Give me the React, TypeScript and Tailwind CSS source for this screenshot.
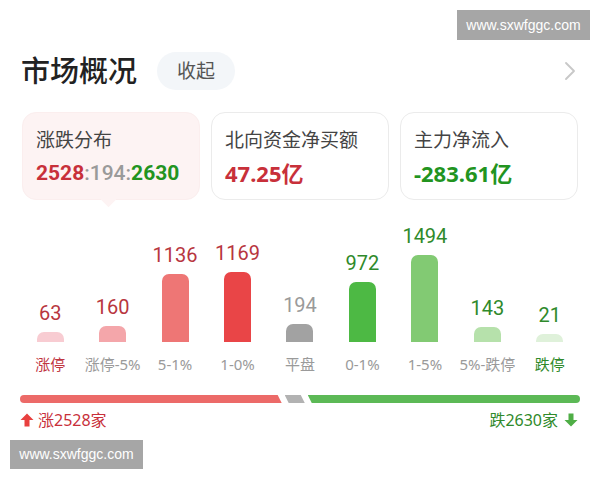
import { ChevronRight } from "lucide-react";

const bars = [
  { label: "涨停", value: 63, h: 10, bar: "bg-[#f8ccd2]", num: "text-[#b83640]", lab: "text-[#c0353f]" },
  { label: "涨停-5%", value: 160, h: 16, bar: "bg-[#f4a6aa]", num: "text-[#b83640]", lab: "text-[#9a9a9a]" },
  { label: "5-1%", value: 1136, h: 68, bar: "bg-[#ee7675]", num: "text-[#b83640]", lab: "text-[#9a9a9a]" },
  { label: "1-0%", value: 1169, h: 70, bar: "bg-[#e94547]", num: "text-[#b83640]", lab: "text-[#9a9a9a]" },
  { label: "平盘", value: 194, h: 18, bar: "bg-[#a2a2a2]", num: "text-[#9a9a9a]", lab: "text-[#9a9a9a]" },
  { label: "0-1%", value: 972, h: 60, bar: "bg-[#4db944]", num: "text-[#2f8a2b]", lab: "text-[#9a9a9a]" },
  { label: "1-5%", value: 1494, h: 87, bar: "bg-[#82ca73]", num: "text-[#2f8a2b]", lab: "text-[#9a9a9a]" },
  { label: "5%-跌停", value: 143, h: 15, bar: "bg-[#b6e1ab]", num: "text-[#2f8a2b]", lab: "text-[#9a9a9a]" },
  { label: "跌停", value: 21, h: 8, bar: "bg-[#dff1da]", num: "text-[#2f8a2b]", lab: "text-[#2f8a2b]" },
];

const up = 2528;
const flat = 194;
const down = 2630;

function Arrow({ down, color }: { down?: boolean; color: string }) {
  return (
    <svg width="14" height="14" viewBox="0 0 14 14" className={down ? "rotate-180" : ""}>
      <path d="M7 0.5 L13.5 7 H9.5 V13.5 H4.5 V7 H0.5 Z" fill={color} />
    </svg>
  );
}

export default function App() {
  return (
    <div className="relative w-[600px] h-[480px] overflow-hidden bg-white font-['Noto_Sans','Noto_Sans_CJK_SC',sans-serif]">
      {/* header */}
      <div className="flex items-center pt-[52px] pl-[21px] pr-[14px]">
        <span className="text-[29px] leading-[38px] font-medium text-[#222]">市场概况</span>
        <span className="ml-[20px] flex h-[38px] items-center rounded-full bg-[#f3f6f9] px-[20px] text-[19px] text-[#555]">
          收起
        </span>
        <ChevronRight className="ml-auto h-[32px] w-[32px] text-[#c8c8c8]" strokeWidth={1.4} />
      </div>

      {/* cards */}
      <div className="mt-[22px] flex gap-[11px] px-[22px]">
        <div className="relative h-[88px] w-[178px] rounded-[14px] border border-[#fbeeee] bg-[#fdf3f3] pl-[13px] pt-[14px]">
          <div className="text-[19px] leading-[26px] text-[#444]">涨跌分布</div>
          <div className="mt-[6px] text-[21px] leading-[28px] font-bold font-['Roboto','Noto_Sans',sans-serif]">
            <span className="text-[#c8303a]">2528</span>
            <span className="font-medium text-[#9a9a9a]">:194:</span>
            <span className="text-[#22941f]">2630</span>
          </div>
          <div className="absolute bottom-[-6px] left-[80px] h-[11px] w-[11px] rotate-45 bg-[#fdf3f3]" />
        </div>
        <div className="h-[88px] w-[178px] rounded-[14px] border border-[#ebebeb] bg-white pl-[13px] pt-[14px]">
          <div className="text-[19px] leading-[26px] text-[#444]">北向资金净买额</div>
          <div className="mt-[6px] text-[22px] leading-[28px] font-bold text-[#c8303a]">47.25亿</div>
        </div>
        <div className="h-[88px] w-[178px] rounded-[14px] border border-[#ebebeb] bg-white pl-[13px] pt-[14px]">
          <div className="text-[19px] leading-[26px] text-[#444]">主力净流入</div>
          <div className="mt-[6px] text-[22px] leading-[28px] font-bold text-[#22941f]">-283.61亿</div>
        </div>
      </div>

      {/* distribution chart */}
      <div className="mt-[24px] grid w-[562px] grid-cols-9 ml-[19px]">
        {bars.map((b) => (
          <div key={b.label} className="flex flex-col items-center">
            <div className="flex h-[118px] flex-col items-center justify-end">
              <span className={`mb-[8px] text-[20px] leading-[22px] font-['Roboto',sans-serif] ${b.num}`}>
                {b.value}
              </span>
              <div className={`w-[27px] rounded-t-[7px] ${b.bar}`} style={{ height: b.h }} />
            </div>
            <span className={`mt-[12px] text-[15px] leading-[20px] whitespace-nowrap ${b.lab}`}>{b.label}</span>
          </div>
        ))}
      </div>

      {/* ratio bar */}
      <div className="mt-[21px] flex h-[8px] gap-[3px] px-[20px]">
        <div
          className="h-full rounded-l-full bg-[#ec6a68] [clip-path:polygon(0_0,calc(100%-4px)_0,100%_100%,0_100%)]"
          style={{ flexGrow: up }}
        />
        <div
          className="h-full bg-[#b2b2b2] [clip-path:polygon(0_0,calc(100%-4px)_0,100%_100%,4px_100%)]"
          style={{ flexGrow: flat }}
        />
        <div
          className="h-full rounded-r-full bg-[#5cb956] [clip-path:polygon(0_0,100%_0,100%_100%,4px_100%)]"
          style={{ flexGrow: down }}
        />
      </div>

      <div className="mt-[6px] flex items-center justify-between px-[20px] text-[16px] leading-[22px]">
        <div className="flex items-center gap-[4px] text-[#c8303a]">
          <Arrow color="#e8403f" />
          <span>涨2528家</span>
        </div>
        <div className="flex items-center gap-[6px] pr-[2px] text-[#2f8a2b]">
          <span>跌2630家</span>
          <Arrow down color="#4fae46" />
        </div>
      </div>

      {/* watermarks */}
      <div className="absolute left-[457px] top-[10px] flex h-[30px] w-[133px] items-center justify-center bg-[#a6a6a6] text-[14px] text-white font-['Liberation_Sans',sans-serif]">
        www.sxwfggc.com
      </div>
      <div className="absolute left-[10px] top-[440px] flex h-[29px] w-[133px] items-center justify-center bg-[#a6a6a6] text-[14px] text-white font-['Liberation_Sans',sans-serif]">
        www.sxwfggc.com
      </div>
    </div>
  );
}
